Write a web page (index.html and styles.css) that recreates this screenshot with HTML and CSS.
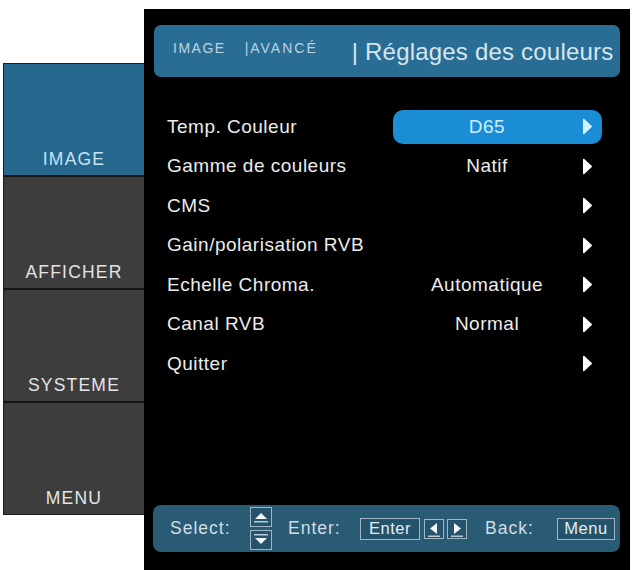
FILE: index.html
```html
<!DOCTYPE html>
<html lang="fr">
<head>
<meta charset="utf-8">
<title>Réglages des couleurs</title>
<link rel="stylesheet" href="styles.css">
</head>
<body>
<div class="screen">
  <div class="sidebar">
    <div class="tab active"><span>IMAGE</span></div>
    <div class="tab"><span>AFFICHER</span></div>
    <div class="tab"><span>SYSTEME</span></div>
    <div class="tab"><span>MENU</span></div>
  </div>
  <div class="panel">
    <div class="header">
      <span class="crumb">IMAGE</span>
      <span class="crumb crumb2">|AVANCÉ</span>
      <span class="title">| Réglages des couleurs</span>
    </div>
    <div class="menu">
      <div class="row selected">
        <span class="label">Temp. Couleur</span>
        <span class="pill"><span class="value">D65</span><svg class="arrow" viewBox="0 0 10 16"><path d="M1.5 1.5 L8.5 8 L1.5 14.5 Z"/></svg></span>
      </div>
      <div class="row">
        <span class="label">Gamme de couleurs</span>
        <span class="pill"><span class="value">Natif</span><svg class="arrow" viewBox="0 0 10 16"><path d="M1.5 1.5 L8.5 8 L1.5 14.5 Z"/></svg></span>
      </div>
      <div class="row">
        <span class="label">CMS</span>
        <span class="pill"><span class="value"></span><svg class="arrow" viewBox="0 0 10 16"><path d="M1.5 1.5 L8.5 8 L1.5 14.5 Z"/></svg></span>
      </div>
      <div class="row">
        <span class="label">Gain/polarisation RVB</span>
        <span class="pill"><span class="value"></span><svg class="arrow" viewBox="0 0 10 16"><path d="M1.5 1.5 L8.5 8 L1.5 14.5 Z"/></svg></span>
      </div>
      <div class="row">
        <span class="label">Echelle Chroma.</span>
        <span class="pill"><span class="value">Automatique</span><svg class="arrow" viewBox="0 0 10 16"><path d="M1.5 1.5 L8.5 8 L1.5 14.5 Z"/></svg></span>
      </div>
      <div class="row">
        <span class="label">Canal RVB</span>
        <span class="pill"><span class="value">Normal</span><svg class="arrow" viewBox="0 0 10 16"><path d="M1.5 1.5 L8.5 8 L1.5 14.5 Z"/></svg></span>
      </div>
      <div class="row">
        <span class="label">Quitter</span>
        <span class="pill"><span class="value"></span><svg class="arrow" viewBox="0 0 10 16"><path d="M1.5 1.5 L8.5 8 L1.5 14.5 Z"/></svg></span>
      </div>
    </div>
    <div class="footer">
      <span class="ftext f-select">Select:</span>
      <span class="updown">
        <span class="key small"><svg viewBox="0 0 20 18"><path d="M4 11 L10 5 L16 11 Z" class="tri"/><rect x="3" y="13" width="14" height="1.5" class="bar"/></svg></span>
        <span class="key small"><svg viewBox="0 0 20 18"><rect x="3" y="3" width="14" height="1.5" class="bar"/><path d="M4 7 L16 7 L10 13 Z" class="tri"/></svg></span>
      </span>
      <span class="ftext f-enter">Enter:</span>
      <span class="key word k-enter">Enter</span>
      <span class="key arrowkey k-left"><svg viewBox="0 0 18 18"><path d="M12 3 L5 8.5 L12 14 Z" class="tri"/><rect x="3" y="15.5" width="12" height="1.5" class="bar"/></svg></span>
      <span class="key arrowkey k-right"><svg viewBox="0 0 18 18"><path d="M6 3 L13 8.5 L6 14 Z" class="tri"/><rect x="3" y="15.5" width="12" height="1.5" class="bar"/></svg></span>
      <span class="ftext f-back">Back:</span>
      <span class="key word k-menu">Menu</span>
    </div>
  </div>
</div>
</body>
</html>
```

FILE: styles.css
```css
html, body {
  margin: 0;
  padding: 0;
}
body {
  width: 634px;
  height: 570px;
  overflow: hidden;
  background: #ffffff;
  font-family: "Liberation Sans", Arial, sans-serif;
}
.screen {
  display: flex;
  align-items: flex-start;
}

/* left tabs */
.sidebar {
  margin-left: 3px;
  margin-top: 63px;
  width: 141px;
  box-sizing: border-box;
  display: flex;
  flex-direction: column;
  gap: 2px;
  background: #141414;
  border: 1px solid #1c1c1c;
  border-right: 0;
}
.tab {
  height: 111px;
  box-sizing: border-box;
  background: #3d3d3d;
  display: flex;
  align-items: flex-end;
  justify-content: center;
  padding-bottom: 6px;
  color: #e4e4e4;
  font-size: 17.5px;
  line-height: 20px;
  letter-spacing: 1.2px;
}
.tab.active {
  background: #25678d;
  color: #c6e3f2;
}

/* main black panel */
.panel {
  margin-top: 9px;
  width: 486px;
  height: 561px;
  box-sizing: border-box;
  background: #000000;
  display: flex;
  flex-direction: column;
  padding: 16px 10px 18px 10px;
}
.header {
  height: 52px;
  flex: none;
  background: #2a6d94;
  border-radius: 7px;
  display: flex;
  align-items: center;
  padding-left: 19px;
  color: #bcd4e2;
}
.crumb {
  font-size: 14px;
  letter-spacing: 1.5px;
  margin-bottom: 7px;
}
.crumb2 {
  margin-left: 19px;
  letter-spacing: 2px;
}
.title {
  margin-left: 34px;
  font-size: 24px;
  letter-spacing: 0.2px;
  color: #d6e6ef;
  margin-top: 2px;
  white-space: nowrap;
}

.menu {
  margin-top: 30px;
  display: flex;
  flex-direction: column;
}
.row {
  height: 39.5px;
  display: flex;
  align-items: center;
  padding-left: 13px;
  color: #ececec;
  font-size: 19px;
  letter-spacing: 0.5px;
}
.label {
  width: 226px;
  flex: none;
}
.pill {
  width: 209px;
  height: 34px;
  box-sizing: border-box;
  border-radius: 10px;
  display: flex;
  align-items: center;
  padding-right: 9px;
}
.value {
  width: 188px;
  text-align: center;
}
.arrow {
  width: 11px;
  height: 17px;
  margin-left: 1px;
}
.arrow path {
  fill: #ffffff;
  stroke: #ffffff;
  stroke-width: 1.5;
  stroke-linejoin: round;
}
.row.selected .pill {
  background: #1b8dd5;
}
.row.selected .value {
  color: #cdeeff;
}
.row.selected .arrow path {
  fill: #d8f1ff;
  stroke: #d8f1ff;
}

/* bottom help bar */
.footer {
  margin-top: auto;
  height: 47px;
  flex: none;
  background: #295b75;
  border-radius: 8px;
  margin-left: -1px;
  display: flex;
  align-items: center;
  padding-left: 17px;
  color: #d2dee5;
}
.ftext {
  font-size: 17.5px;
  letter-spacing: 1px;
}
.f-select { width: 62px; }
.f-enter { width: 52px; margin-left: 16px; }
.f-back { width: 52px; margin-left: 18px; }
.updown {
  margin-left: 18px;
  display: flex;
  flex-direction: column;
  gap: 3px;
}
.key {
  box-sizing: border-box;
  border: 1.5px solid #9fb7c4;
  background: #24536b;
  color: #e4ecf0;
  display: flex;
  align-items: center;
  justify-content: center;
}
.key svg {
  width: 100%;
  height: 100%;
  display: block;
}
.key .tri { fill: #f2f6f8; }
.key .bar { fill: #b9ccd6; }
.key.small {
  width: 22px;
  height: 20px;
}
.key.word {
  height: 22px;
  font-size: 16.5px;
  letter-spacing: 0.5px;
}
.k-enter { width: 60px; margin-left: 20px; }
.k-menu { width: 58px; margin-left: 20px; }
.arrowkey {
  width: 20px;
  height: 20px;
}
.k-left { margin-left: 4px; }
.k-right { margin-left: 3px; }
```
